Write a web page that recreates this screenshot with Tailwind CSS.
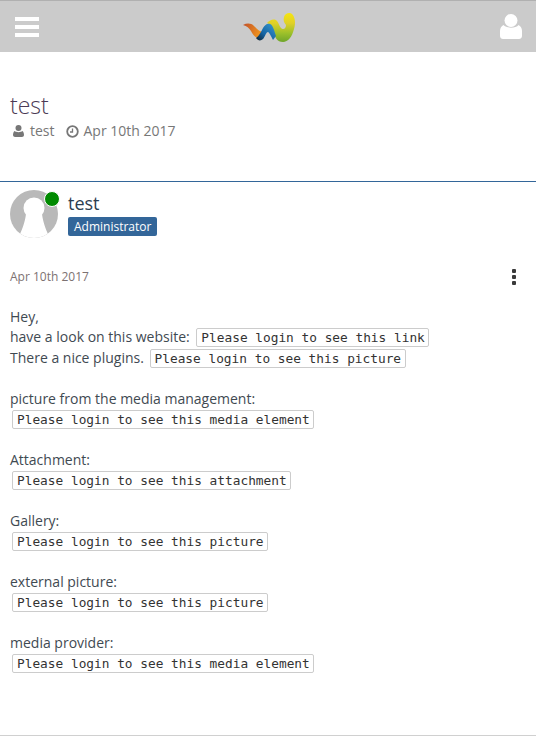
<!DOCTYPE html>
<html lang="en">
<head>
    <meta charset="UTF-8">
    <title>test</title>
    <script src="https://cdn.jsdelivr.net/npm/@tailwindcss/browser@4"></script>
</head>
<body class="bg-white text-[#3a3a3a] font-['Open_Sans',sans-serif] h-[736px] overflow-hidden border-b border-[#d0d0d0]">

<header class="h-[52px] bg-[#cbcbcb] border-t border-[#b0b0b0] flex items-center justify-between pl-[15px] pr-[14px]">
    <div class="w-[24px] flex flex-col gap-[4px]">
        <div class="h-[4px] bg-white"></div>
        <div class="h-[4px] bg-white"></div>
        <div class="h-[4px] bg-white"></div>
    </div>
    <svg width="53" height="34" viewBox="0 0 53 34" class="ml-[-1px] mt-[1px]">
        <defs>
            <linearGradient id="orange" x1="0" y1="0" x2="1" y2="0.3">
                <stop offset="0" stop-color="#c0502a"/>
                <stop offset="1" stop-color="#f39a1e"/>
            </linearGradient>
            <linearGradient id="blue" x1="0" y1="1" x2="1" y2="0">
                <stop offset="0" stop-color="#10202c"/>
                <stop offset="0.4" stop-color="#1565a5"/>
                <stop offset="1" stop-color="#3d9bd0"/>
            </linearGradient>
            <linearGradient id="green" gradientUnits="userSpaceOnUse" x1="0" y1="3" x2="0" y2="32">
                <stop offset="0" stop-color="#f5e50f"/>
                <stop offset="0.35" stop-color="#e0d028"/>
                <stop offset="0.7" stop-color="#9cc02a"/>
                <stop offset="1" stop-color="#6fa52a"/>
            </linearGradient>
        </defs>
        <path d="M0 15 C4 13 8 13 11 16 C14 19 17 22 21 22 L19 29 C13 29 10 25 8 21 C6 18 4 16 0 15Z" fill="url(#orange)"/>
        <path d="M24 13 C27 10 31 8 34 11 C36 13 37 19 40 19 C42 19 43 17 43 15 C41 13 40 10 41 7 C42 3 47 2 49 4 C52 7 53 13 51 19 C49 27 45 32 40 32 C34 32 32 27 30 22 C28 18 27 14 24 13Z" fill="url(#green)"/>
        <path d="M13 28 C16 26 18 22 20 18 C22 15 24 13 27 14 C30 15 31 20 33 26 L30 30 C28 26 26 22 25 22 C23 22 22 27 20 29 C18 31 15 31 13 28Z" fill="url(#blue)"/>
    </svg>
    <svg width="22" height="25" viewBox="0 0 22 25" fill="#fff">
        <circle cx="11" cy="6.5" r="6.5"/>
        <path d="M3.5 11 C6 14.5 16 14.5 18.5 11 C20.5 12 22 14 22 17 L22 22 C22 24 20.5 25 19 25 L3 25 C1.500 25 0 24 0 22 L0 17 C0 14 1.500 12 3.500 11Z"/>
    </svg>
</header>

<section class="h-[130px] border-b border-[#336699] px-[10px] pt-[37px]">
    <h1 class="text-[23px] leading-[32px] font-light text-[#4b3a55]">test</h1>
    <div class="flex items-center text-[14px] leading-[20px] text-[#777]">
        <svg width="11" height="12" viewBox="0 0 11 12" fill="#777" class="ml-[3px] mr-[6px]">
            <circle cx="5.500" cy="3" r="3"/>
            <path d="M1.500 6 C3 7.500 8 7.500 9.500 6 C10.500 7 11 8.500 11 10 C11 11.300 10 12 9 12 L2 12 C1 12 0 11.300 0 10 C0 8.500 .5 7 1.500 6Z"/>
        </svg>
        <span>test</span>
        <svg width="13" height="13" viewBox="0 0 13 13" fill="none" stroke="#777" class="ml-[11px] mr-[5px]">
            <circle cx="6.500" cy="6.500" r="5.300" stroke-width="1.800"/>
            <path d="M6.500 3.500 V7 H4" stroke-width="1.300"/>
        </svg>
        <span>Apr 10th 2017</span>
    </div>
</section>

<article class="px-[10px] pt-[8px]">
    <div class="flex gap-[10px] h-[48px]">
        <div class="relative w-[48px] h-[48px] rounded-full bg-[#b9b9b9]">
            <svg width="48" height="48" viewBox="0 0 48 48" class="rounded-full">
                <circle cx="24" cy="18" r="10.500" fill="#fff"/>
                <path d="M16 24 C15 32 12 40 10 44 C18 50 30 50 38 44 C36 40 33 32 32 24Z" fill="#fff"/>
            </svg>
            <span class="absolute top-[1px] right-[-2px] w-[14px] h-[14px] rounded-full bg-[#008a00] border border-white box-content"></span>
        </div>
        <div>
            <div class="text-[18px] leading-[24px] mt-[1px] text-[#2c3e50]">test</div>
            <span class="block w-fit mt-[2px] bg-[#336699] text-white text-[12px] leading-[19px] px-[6px] rounded-[2px]">Administrator</span>
        </div>
    </div>

    <div class="flex justify-between items-center mt-[30px]">
        <span class="text-[12px] leading-[18px] text-[#7d7272]">Apr 10th 2017</span>
        <div class="flex flex-col gap-[2px] mr-[10px]">
            <div class="w-[4px] h-[4px] rounded-[1px] bg-[#3a3a3a]"></div>
            <div class="w-[4px] h-[4px] rounded-[1px] bg-[#3a3a3a]"></div>
            <div class="w-[4px] h-[4px] rounded-[1px] bg-[#3a3a3a]"></div>
        </div>
    </div>

    <div class="text-[14px] leading-[20.33px] text-[#3f4a52]">
        <p class="mt-[21px]">
            Hey,<br>
            have a look on this website: <span class="font-['DejaVu_Sans_Mono',monospace] text-[12.8px] leading-[14px] border border-[#cccccc] rounded-[2px] pl-[4px] pr-[3px] py-[1px] ml-[3px] text-[#333]">Please login to see this link</span><br>
            There a nice plugins. <span class="font-['DejaVu_Sans_Mono',monospace] text-[12.8px] leading-[14px] border border-[#cccccc] rounded-[2px] px-[4px] py-[1px] mx-[2px] text-[#333]">Please login to see this picture</span>
        </p>
        <p class="mt-[20.63px]">
            picture from the media management:<br>
            <span class="font-['DejaVu_Sans_Mono',monospace] text-[12.8px] leading-[14px] border border-[#cccccc] rounded-[2px] pl-[4px] pr-[3px] py-[1px] mx-[2px] text-[#333]">Please login to see this media element</span><br>
            <br>
            Attachment:<br>
            <span class="font-['DejaVu_Sans_Mono',monospace] text-[12.8px] leading-[14px] border border-[#cccccc] rounded-[2px] pl-[4px] pr-[3px] py-[1px] mx-[2px] text-[#333]">Please login to see this attachment</span><br>
            <br>
            Gallery:<br>
            <span class="font-['DejaVu_Sans_Mono',monospace] text-[12.8px] leading-[14px] border border-[#cccccc] rounded-[2px] pl-[4px] pr-[3px] py-[1px] mx-[2px] text-[#333]">Please login to see this picture</span><br>
            <br>
            external picture:<br>
            <span class="font-['DejaVu_Sans_Mono',monospace] text-[12.8px] leading-[14px] border border-[#cccccc] rounded-[2px] pl-[4px] pr-[3px] py-[1px] mx-[2px] text-[#333]">Please login to see this picture</span><br>
            <br>
            media provider:<br>
            <span class="font-['DejaVu_Sans_Mono',monospace] text-[12.8px] leading-[14px] border border-[#cccccc] rounded-[2px] pl-[4px] pr-[3px] py-[1px] mx-[2px] text-[#333]">Please login to see this media element</span>
        </p>
    </div>
</article>

</body>
</html>
